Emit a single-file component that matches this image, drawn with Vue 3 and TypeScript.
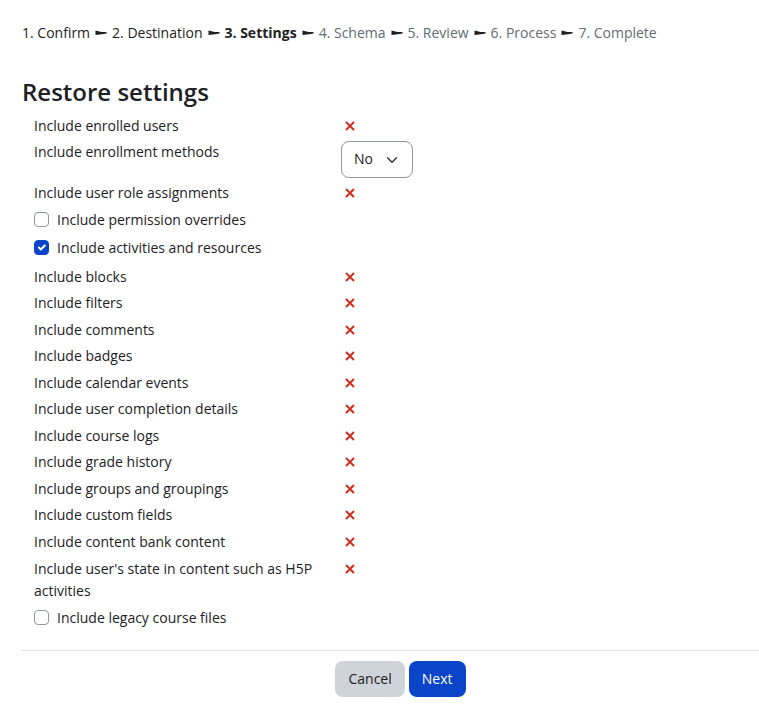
<script setup lang="ts">
import { reactive, ref } from 'vue'

interface Setting {
  id: string
  label: string
  kind: 'locked' | 'select' | 'checkbox'
}

const steps: string[] = [
  '1. Confirm',
  '2. Destination',
  '3. Settings',
  '4. Schema',
  '5. Review',
  '6. Process',
  '7. Complete',
]
const currentStep = 2

const settings: Setting[] = [
  { id: 'users', label: 'Include enrolled users', kind: 'locked' },
  { id: 'enrolments', label: 'Include enrollment methods', kind: 'select' },
  { id: 'roles', label: 'Include user role assignments', kind: 'locked' },
  { id: 'permissions', label: 'Include permission overrides', kind: 'checkbox' },
  { id: 'activities', label: 'Include activities and resources', kind: 'checkbox' },
  { id: 'blocks', label: 'Include blocks', kind: 'locked' },
  { id: 'filters', label: 'Include filters', kind: 'locked' },
  { id: 'comments', label: 'Include comments', kind: 'locked' },
  { id: 'badges', label: 'Include badges', kind: 'locked' },
  { id: 'calendar', label: 'Include calendar events', kind: 'locked' },
  { id: 'completion', label: 'Include user completion details', kind: 'locked' },
  { id: 'logs', label: 'Include course logs', kind: 'locked' },
  { id: 'grades', label: 'Include grade history', kind: 'locked' },
  { id: 'groups', label: 'Include groups and groupings', kind: 'locked' },
  { id: 'fields', label: 'Include custom fields', kind: 'locked' },
  { id: 'contentbank', label: 'Include content bank content', kind: 'locked' },
  { id: 'h5p', label: "Include user's state in content such as H5P activities", kind: 'locked' },
  { id: 'legacy', label: 'Include legacy course files', kind: 'checkbox' },
]

const checked = reactive<Record<string, boolean>>({
  permissions: false,
  activities: true,
  legacy: false,
})
const enrolment = ref('No')
</script>

<template>
  <main class="page">
    <nav class="steps">
      <template v-for="(step, i) in steps" :key="step">
        <svg v-if="i > 0" class="arrow" viewBox="0 0 12 6" aria-hidden="true">
          <path d="M0.5 0.5 L6.5 2 L11.5 2 L11.5 3.4 L7 4.2 L0.5 5 Z" />
        </svg>
        <span :class="{ current: i === currentStep, later: i > currentStep }">{{ step }}</span>
      </template>
    </nav>

    <h2 class="title">Restore settings</h2>

    <form @submit.prevent>
      <div v-for="s in settings" :key="s.id" class="row" :class="s.kind">
        <template v-if="s.kind === 'checkbox'">
          <input :id="s.id" v-model="checked[s.id]" class="box" type="checkbox" />
          <label :for="s.id">{{ s.label }}</label>
        </template>
        <template v-else-if="s.kind === 'select'">
          <label class="name" :for="s.id">{{ s.label }}</label>
          <div class="value">
            <select :id="s.id" v-model="enrolment" class="choice">
              <option>No</option>
              <option>Yes</option>
            </select>
          </div>
        </template>
        <template v-else>
          <span class="name">{{ s.label }}</span>
          <div class="value">
            <svg class="cross" viewBox="0 0 10 10" role="img" aria-label="No">
              <path d="M1 1 L9 9 M9 1 L1 9" />
            </svg>
          </div>
        </template>
      </div>

      <div class="actions">
        <button type="button" class="btn cancel">Cancel</button>
        <button type="submit" class="btn next">Next</button>
      </div>
    </form>
  </main>
</template>

<style>
body {
  margin: 0;
  background: #fff;
}
</style>

<style scoped>
.page {
  padding: 22px 0 0 22px;
  color: #1d2125;
  font-family: "Segoe UI", "Open Sans", "Noto Sans", sans-serif;
  font-size: 14px;
  line-height: 1.61;
}

.steps {
  display: flex;
  flex-wrap: wrap;
  align-items: center;
  column-gap: 5px;
}

.arrow {
  width: 12px;
  height: 6px;
  fill: #1d2125;
}

.current {
  font-weight: 700;
}

.later {
  color: #626b73;
}

.title {
  margin: 31px 0 7px;
  font-size: 24px;
  font-weight: 600;
  line-height: 32px;
}

.row {
  display: grid;
  grid-template-columns: 5fr 7fr;
  padding-bottom: 4px;
}

.name,
.value {
  padding: 0 12px;
}

.value {
  display: flex;
  align-items: flex-start;
}

.cross {
  width: 10px;
  height: 10px;
  margin: 6px 4px;
  fill: none;
  stroke: #ca3120;
  stroke-width: 2;
}

.checkbox {
  display: flex;
  align-items: flex-start;
  gap: 8px;
  padding: 0 12px 6px;
}

.box {
  appearance: none;
  width: 15px;
  height: 15px;
  margin: 3px 0 0;
  border: 1px solid #8f959e;
  border-radius: 4px;
  background: #fff;
}

.box:checked {
  border-color: #0a44c8;
  background: #0a44c8 url("data:image/svg+xml,%3Csvg xmlns='http://www.w3.org/2000/svg' viewBox='0 0 20 20'%3E%3Cpath fill='none' stroke='%23fff' stroke-linecap='round' stroke-linejoin='round' stroke-width='3' d='m6 10 3 3 6-6'/%3E%3C/svg%3E") center / contain no-repeat;
}

.choice {
  appearance: none;
  width: 72px;
  height: 37px;
  padding: 0 12px;
  border: 1px solid #8f959e;
  border-radius: 8px;
  background: #fff url("data:image/svg+xml,%3Csvg xmlns='http://www.w3.org/2000/svg' viewBox='0 0 16 16'%3E%3Cpath fill='none' stroke='%23343a40' stroke-linecap='round' stroke-linejoin='round' stroke-width='2' d='m2 5 6 6 6-6'/%3E%3C/svg%3E") right 14px center / 12px no-repeat;
  color: inherit;
  font: inherit;
}

.actions {
  display: flex;
  justify-content: center;
  gap: 4px;
  margin-top: 15px;
  padding: 10px 0 19px 20px;
  border-top: 1px solid #dee2e6;
}

.btn {
  height: 36px;
  padding: 0 13px;
  border: 0;
  border-radius: 8px;
  font: inherit;
}

.cancel {
  background: #ced4da;
  color: #1d2125;
}

.next {
  background: #0a44c8;
  color: #fff;
}
</style>
